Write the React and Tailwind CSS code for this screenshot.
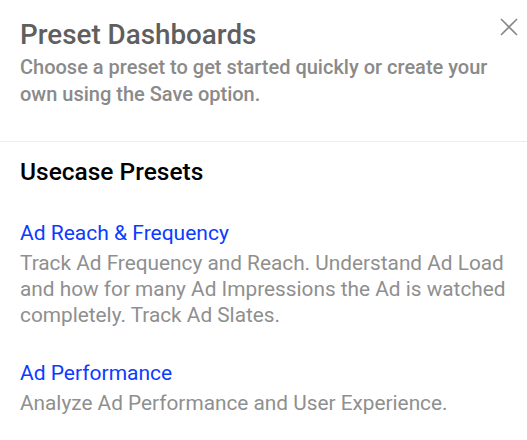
export default function App() {
  return (
    <div className="w-[527px] h-[440px] bg-white overflow-hidden" style={{ fontFamily: "Roboto, 'Noto Sans', sans-serif" }}>
      <div className="relative px-5 pt-[17px] pb-[33px] border-b border-[#ececec]">
        <h1 className="text-[27.8px] leading-[36px] font-medium text-[#5f5f5f]">Preset Dashboards</h1>
        <p className="mt-[1px] text-[20px] leading-[27px] font-medium text-[#8a8a8a]">
          Choose a preset to get started quickly or create your own using the Save option.
        </p>
        <button className="absolute right-[9px] top-[18px] w-[18px] h-[18px] text-[#888]">
          <svg viewBox="0 0 18 18" width="18" height="18" fill="none" stroke="currentColor" strokeWidth="1.6">
            <path d="M1 1L17 17M17 1L1 17" />
          </svg>
        </button>
      </div>
      <div className="pl-5 pr-3 pt-[14px]">
        <h2 className="text-[24.5px] leading-[32px] font-medium text-black">Usecase Presets</h2>
        <div className="mt-[31px]">
          <div className="text-[21px] leading-[28px] text-[#0a3cff]">Ad Reach &amp; Frequency</div>
          <p className="mt-[3px] text-[20.8px] leading-[26px] text-[#8f8f8f]">
            Track Ad Frequency and Reach. Understand Ad Load and how for many Ad Impressions the Ad is watched completely. Track Ad Slates.
          </p>
        </div>
        <div className="mt-[31px]">
          <div className="text-[21px] leading-[28px] text-[#0a3cff]">Ad Performance</div>
          <p className="mt-[3px] text-[20.8px] leading-[26px] text-[#8f8f8f]">
            Analyze Ad Performance and User Experience.
          </p>
        </div>
      </div>
    </div>
  );
}
